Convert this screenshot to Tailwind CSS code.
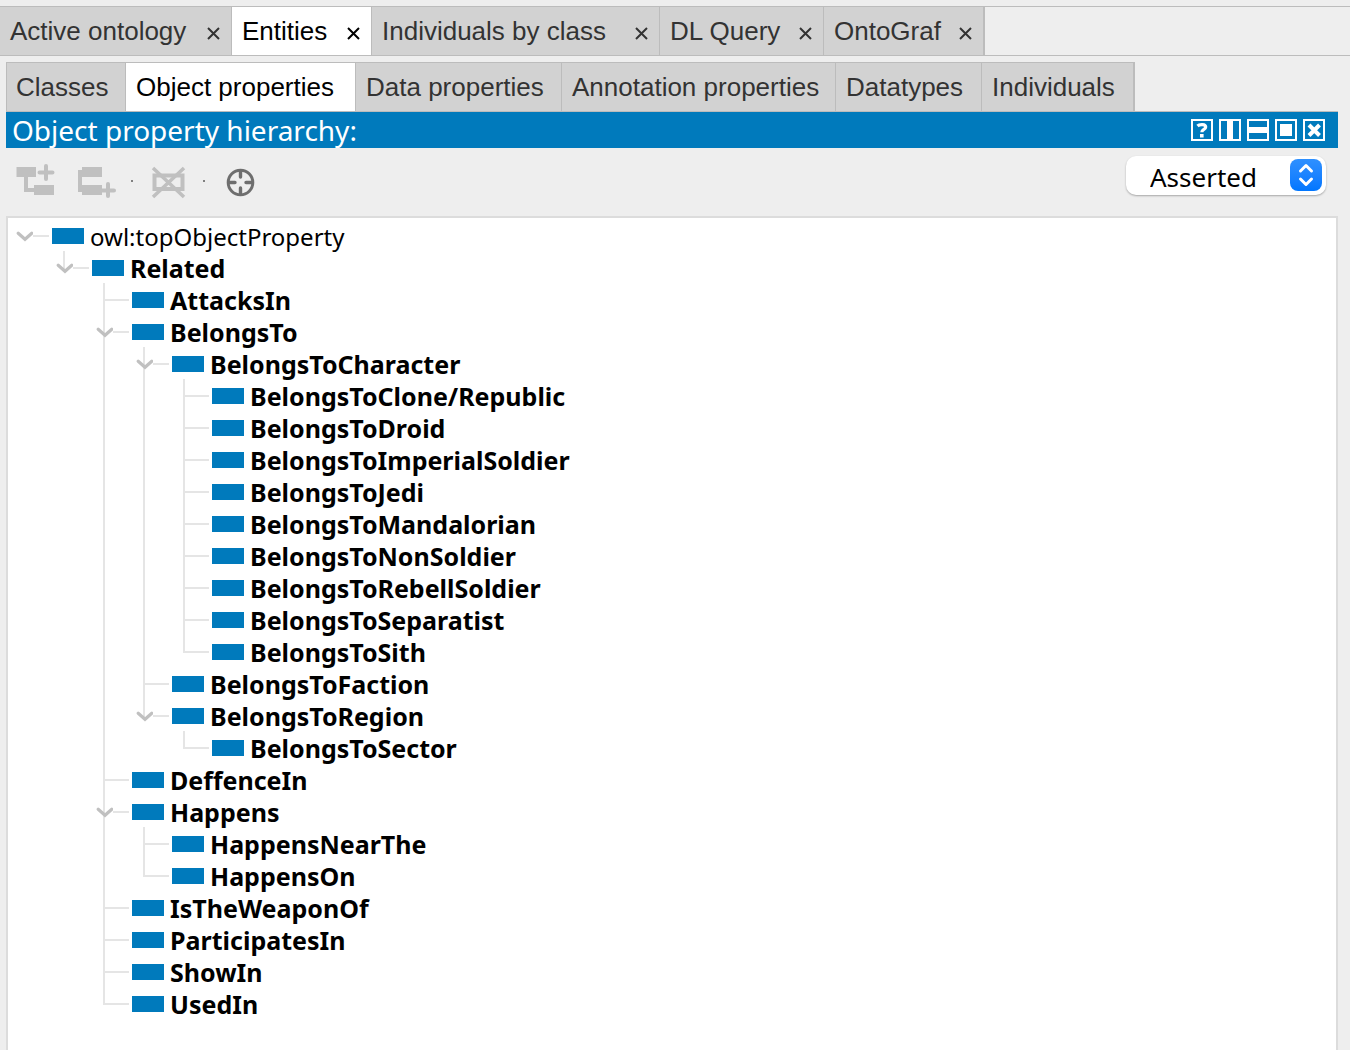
<!DOCTYPE html>
<html lang="en">
<head>
<meta charset="utf-8">
<meta name="viewport" content="width=device-width, initial-scale=1">
<title>Object property hierarchy</title>
<script src="https://cdn.jsdelivr.net/npm/@tailwindcss/browser@4"></script>
</head>
<body class="min-h-screen flex flex-col bg-[#eeeeee] pt-1.5 text-black font-['Noto_Sans',sans-serif]">

<svg class="hidden" aria-hidden="true">
  <symbol id="chevron" viewBox="0 0 17 16"><path d="M2.200 5.300 L9 11.300 L15.800 5.300" fill="none" stroke="#c0c0c0" stroke-width="3.200" stroke-linecap="round"/></symbol>
</svg>

<nav aria-label="Main tabs" class="flex h-[50px] border-y border-[#bcbcbc] font-['Liberation_Sans',sans-serif] text-[26px] leading-12 whitespace-nowrap text-[#333333] [&>div]:flex [&>div]:justify-between [&>div]:border-r [&>div]:border-[#bcbcbc] [&>div]:bg-[#d2d2d2] [&>div]:pr-2.5 [&>div]:pl-[10px]">
  <div class="w-[232px]"><button>Active ontology</button><button aria-label="Close Active ontology"><svg class="mt-1 size-4" viewBox="0 0 16 16" stroke="currentColor" stroke-width="2"><path d="M3 3 14 14M14 3 3 14"/></svg></button></div>
  <div class="w-[140px] bg-white! text-black"><button>Entities</button><button aria-label="Close Entities"><svg class="mt-1 size-4" viewBox="0 0 16 16" stroke="currentColor" stroke-width="2"><path d="M3 3 14 14M14 3 3 14"/></svg></button></div>
  <div class="w-[288px]"><button>Individuals by class</button><button aria-label="Close Individuals by class"><svg class="mt-1 size-4" viewBox="0 0 16 16" stroke="currentColor" stroke-width="2"><path d="M3 3 14 14M14 3 3 14"/></svg></button></div>
  <div class="w-[164px]"><button>DL Query</button><button aria-label="Close DL Query"><svg class="mt-1 size-4" viewBox="0 0 16 16" stroke="currentColor" stroke-width="2"><path d="M3 3 14 14M14 3 3 14"/></svg></button></div>
  <div class="w-[161px] border-r-2!"><button>OntoGraf</button><button aria-label="Close OntoGraf"><svg class="mt-1 size-4" viewBox="0 0 16 16" stroke="currentColor" stroke-width="2"><path d="M3 3 14 14M14 3 3 14"/></svg></button></div>
</nav>

<main class="mt-1.5 mr-3 ml-1.5 flex grow flex-col">
  <nav aria-label="Entity tabs" class="flex h-[50px] border-b border-[#bcbcbc] font-['Liberation_Sans',sans-serif] text-[26px] leading-12 whitespace-nowrap text-[#333333] [&>button]:border-t [&>button]:border-r [&>button]:border-[#bcbcbc] [&>button]:bg-[#d2d2d2] [&>button]:pl-[10px] [&>button]:text-left">
    <button class="w-[120px] border-l pl-[9px]!">Classes</button>
    <button class="w-[230px] bg-white! text-black">Object properties</button>
    <button class="w-[206px]">Data properties</button>
    <button class="w-[274px]">Annotation properties</button>
    <button class="w-[146px]">Datatypes</button>
    <button class="w-[153px] border-r-2!">Individuals</button>
  </nav>

  <header class="flex h-9 items-center justify-between bg-[#007abc] pr-[13px] pl-1.5 text-white">
    <h1 class="text-[28px] leading-9">Object property hierarchy:</h1>
    <div class="flex gap-1.5">
      <button aria-label="Help" class="size-[22px]"><svg viewBox="0 0 22 22" fill="none" stroke="#fff"><path d="M1 1H21V21H1Z" stroke-width="2"/><path d="M6.500 7C8.500 5 14.700 4.800 14.700 8C14.700 10.500 10.800 10.300 10.800 13.300" stroke-width="3.200"/><path d="M9 15H12.600V18.500H9Z" fill="#fff" stroke="none"/></svg></button>
      <button aria-label="Split vertically" class="size-[22px]"><svg viewBox="0 0 22 22" fill="none" stroke="#fff"><path d="M1 1H21V21H1Z" stroke-width="2"/><path d="M11 1V21" stroke-width="6"/></svg></button>
      <button aria-label="Split horizontally" class="size-[22px]"><svg viewBox="0 0 22 22" fill="none" stroke="#fff"><path d="M1 1H21V21H1Z" stroke-width="2"/><path d="M1 11H21" stroke-width="6"/></svg></button>
      <button aria-label="Float" class="size-[22px]"><svg viewBox="0 0 22 22" fill="none" stroke="#fff"><path d="M1 1H21V21H1Z" stroke-width="2"/><path d="M5 5H17V17H5Z" fill="#fff" stroke="none"/></svg></button>
      <button aria-label="Close" class="size-[22px]"><svg viewBox="0 0 22 22" fill="none" stroke="#fff"><path d="M1 1H21V21H1Z" stroke-width="2"/><path d="M6 6 16.500 16.500M16.500 6 6 16.500" stroke-width="4"/></svg></button>
    </div>
  </header>

  <div class="flex h-[68px] items-start justify-between pt-2 pr-3 pl-2.5">
    <div class="flex items-center pt-1.5">
      <button aria-label="Add sub property" disabled class="mr-5 size-10"><svg viewBox="0 0 40 40" fill="#c0c0c0"><path d="M0.500 5H20V15H12V26H18V23H38V33H18V30H8V15H0.500Z"/><path d="M30 4V17M23.500 10.500H36.500" stroke="#c0c0c0" stroke-width="4" stroke-linecap="round"/></svg></button>
      <button aria-label="Add sibling property" disabled class="size-10"><svg viewBox="0 0 40 40" fill="#c0c0c0"><path d="M2 8H6V5H26V15H6V23H26V33H6V30H2Z"/><path d="M32 22V34M26 28.500H38" stroke="#c0c0c0" stroke-width="4" stroke-linecap="round"/></svg></button>
      <span class="mx-[15px] mb-0.5 size-0.5 bg-[#808080]"></span>
      <button aria-label="Delete selected properties" disabled class="size-10"><svg viewBox="0 0 40 40" fill="none" stroke="#c0c0c0"><path d="M6.500 13.500H34.500V27H6.500Z" stroke-width="4"/><path d="M5 6 36 35M36 6 5 35" stroke-width="3.500"/></svg></button>
      <span class="mx-[15px] mb-0.5 size-0.5 bg-[#808080]"></span>
      <button aria-label="Locate selection" class="size-10"><svg viewBox="0 0 40 40" fill="none" stroke="#6e6e6e" stroke-width="3"><circle cx="20.500" cy="20.500" r="12.300"/><path d="M20.500 9V15M20.500 26V32M9 20.500H15M26 20.500H32" stroke-width="3.400" stroke-linecap="round"/></svg></button>
    </div>
    <div class="relative">
      <select aria-label="Hierarchy view" class="h-[39px] w-[200px] appearance-none rounded-[10px] bg-white pt-0.5 pl-6 text-[26px] text-black shadow-[0_1px_2px_rgba(0,0,0,0.3)]"><option>Asserted</option><option>Inferred</option></select>
      <span class="pointer-events-none absolute top-[3px] right-1 size-8 rounded-lg bg-linear-to-b from-[#2e90ff] to-[#0076ff]"><svg viewBox="0 0 32 32" fill="none" stroke="#fff" stroke-width="3" stroke-linecap="round" stroke-linejoin="round"><path d="M10.500 12 16 6.500 21.500 12M10.500 20 16 25.500 21.500 20"/></svg></span>
    </div>
  </div>

  <section aria-label="Property tree" class="grow border-2 border-b-0 border-[#dcdcdc] bg-white pt-0.5 pl-2 text-2xl">
    <!-- Row parts: gutter (chevron button or branch line), swatch, label. Nested items draw their trunk line with ::before. -->
    <ul class="[&_ul]:pl-10 [&_ul]:text-[25px] [&_li]:relative [&_ul]:font-bold [&_li_li]:before:absolute [&_li_li]:before:-top-px [&_li_li]:before:bottom-0 [&_li_li]:before:left-[7px] [&_li_li]:before:w-0.5 [&_li_li]:before:bg-[#e5e5e5] [&_li_li:last-child]:before:bottom-auto [&_li_li:last-child]:before:h-[18px] [&_p]:relative [&_p]:flex [&_p]:h-8 [&_p]:items-center [&_p]:whitespace-nowrap [&_button]:flex [&_button]:w-9 [&_button]:items-center [&_button]:after:h-0.5 [&_button]:after:w-4 [&_button]:after:bg-[#e5e5e5] [&_svg]:h-4 [&_svg]:w-[17px] [&_i]:mr-[3px] [&_i]:ml-[7px] [&_i]:h-0.5 [&_i]:w-[26px] [&_i]:bg-[#e5e5e5] [&_b]:mr-1.5 [&_b]:h-4 [&_b]:w-8 [&_b]:bg-[#007abc] [&_span]:pt-0.5">
      <li><p><button aria-label="Collapse owl:topObjectProperty"><svg><use href="#chevron"/></svg></button><b></b><span>owl:topObjectProperty</span></p>
        <ul>
          <li><p><button aria-label="Collapse Related"><svg><use href="#chevron"/></svg></button><b></b><span>Related</span></p>
            <ul>
              <li><p><i></i><b></b><span>AttacksIn</span></p></li>
              <li><p><button aria-label="Collapse BelongsTo"><svg><use href="#chevron"/></svg></button><b></b><span>BelongsTo</span></p>
                <ul>
                  <li><p><button aria-label="Collapse BelongsToCharacter"><svg><use href="#chevron"/></svg></button><b></b><span>BelongsToCharacter</span></p>
                    <ul>
                      <li><p><i></i><b></b><span>BelongsToClone/Republic</span></p></li>
                      <li><p><i></i><b></b><span>BelongsToDroid</span></p></li>
                      <li><p><i></i><b></b><span>BelongsToImperialSoldier</span></p></li>
                      <li><p><i></i><b></b><span>BelongsToJedi</span></p></li>
                      <li><p><i></i><b></b><span>BelongsToMandalorian</span></p></li>
                      <li><p><i></i><b></b><span>BelongsToNonSoldier</span></p></li>
                      <li><p><i></i><b></b><span>BelongsToRebellSoldier</span></p></li>
                      <li><p><i></i><b></b><span>BelongsToSeparatist</span></p></li>
                      <li><p><i></i><b></b><span>BelongsToSith</span></p></li>
                    </ul>
                  </li>
                  <li><p><i></i><b></b><span>BelongsToFaction</span></p></li>
                  <li><p><button aria-label="Collapse BelongsToRegion"><svg><use href="#chevron"/></svg></button><b></b><span>BelongsToRegion</span></p>
                    <ul>
                      <li><p><i></i><b></b><span>BelongsToSector</span></p></li>
                    </ul>
                  </li>
                </ul>
              </li>
              <li><p><i></i><b></b><span>DeffenceIn</span></p></li>
              <li><p><button aria-label="Collapse Happens"><svg><use href="#chevron"/></svg></button><b></b><span>Happens</span></p>
                <ul>
                  <li><p><i></i><b></b><span>HappensNearThe</span></p></li>
                  <li><p><i></i><b></b><span>HappensOn</span></p></li>
                </ul>
              </li>
              <li><p><i></i><b></b><span>IsTheWeaponOf</span></p></li>
              <li><p><i></i><b></b><span>ParticipatesIn</span></p></li>
              <li><p><i></i><b></b><span>ShowIn</span></p></li>
              <li><p><i></i><b></b><span>UsedIn</span></p></li>
            </ul>
          </li>
        </ul>
      </li>
    </ul>
  </section>
</main>
</body>
</html>
